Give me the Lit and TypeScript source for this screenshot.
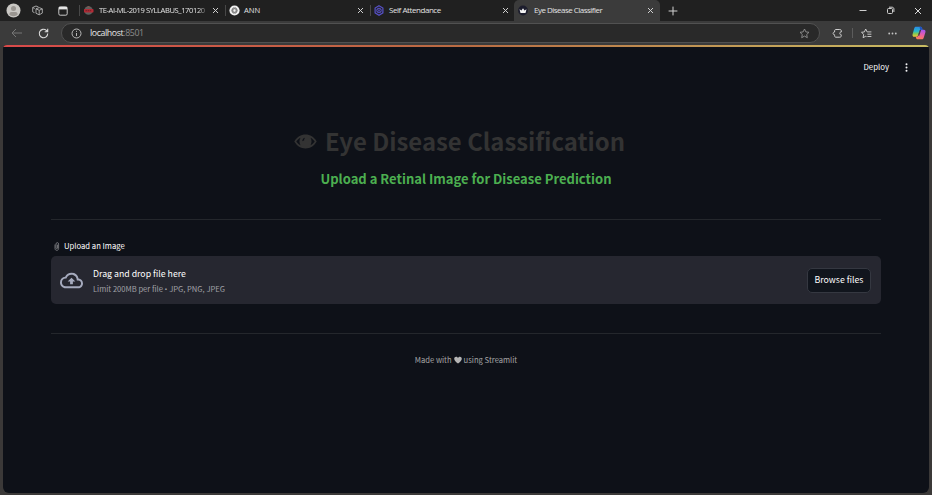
import { LitElement, html, css } from "lit";
import { customElement } from "lit/decorators.js";

const closeIcon = html`<svg class="close" width="7" height="7" viewBox="0 0 7 7"><path d="M1 1l5 5M6 1l-5 5" stroke="#d0d0d0" stroke-width="1" fill="none"/></svg>`;

@customElement("browser-tabs")
class BrowserTabs extends LitElement {
  static styles = css`
    :host { display: flex; height: 21px; background: #202020; align-items: center; color: #e2e2e2; font: 7.6px/18px "Open Sans", "Noto Sans", sans-serif; }
    svg { display: block; flex: none; }
    .tools { width: 79px; height: 20px; display: flex; align-items: center; padding-left: 6px; box-sizing: border-box; }
    .tools svg:nth-child(2) { margin-left: 11px; }
    .tools svg:nth-child(3) { margin-left: 15px; }
    .tab { box-sizing: border-box; height: 21px; display: flex; align-items: center; position: relative; padding-left: 4px; }
    .tab.sep::before { content: ""; position: absolute; left: 0; top: 5px; width: 1px; height: 11px; background: #484848; }
    .t { white-space: nowrap; height: 20px; margin-left: 4px; }
    .t1 { width: 110px; margin-left: 5px; letter-spacing: -0.42px; -webkit-mask-image: linear-gradient(90deg, #000 90%, transparent); mask-image: linear-gradient(90deg, #000 90%, transparent); }
    .t3 { margin-left: 5px; letter-spacing: -0.44px; font-size: 8px; }
    .t4 { margin-left: 6px; letter-spacing: -0.52px; font-size: 8px; }
    .a { width: 146px; } .b { width: 145px; } .c { width: 144px; }
    .d { width: 146px; background: #3b3b3b; border-radius: 5px 5px 0 0; }
    .close { margin-left: auto; margin-right: 6px; }
    .c .close { margin-right: 5px; }
    .win { margin-left: auto; display: flex; align-items: center; }
    .win svg + svg { margin-left: 19px; }
    .win svg:last-child { margin-right: 10px; }
    .plus { margin-left: 8px; }
  `;
  render() {
    return html`
      <div class="tools">
        <svg width="15" height="15" viewBox="0 0 15 15"><circle cx="7.5" cy="7.5" r="7" fill="#c9c7c3"/><circle cx="7.5" cy="5.6" r="2.5" fill="#999590"/><path d="M3.3 11.6c0-2 1-2.7 2.2-2.7h4c1.200 0 2.200.7 2.200 2.700-1 1-2.500 1.600-4.200 1.600s-3.200-.6-4.200-1.600z" fill="#999590"/></svg>
        <svg width="11" height="11" viewBox="0 0 11 11" fill="none" stroke="#b2b2b2" stroke-width=".9" stroke-linejoin="round"><path d="M4 3.800l3.300-1.200 3 1.300v4.200L7.200 9.800 4 8.300zM4 3.800l3.200 1.500 3.100-1.400M7.200 5.300v4.500M2.500 7.700L.7 6.800V2.500L4 1l2.500 1M.7 2.500l2 1"/></svg>
        <svg width="10" height="10" viewBox="0 0 10 10"><rect x=".8" y=".8" width="8.400" height="8.400" rx="1.400" fill="none" stroke="#c8c8c8"/><path d="M1 1h8v2.400H1z" fill="#e5e5e5"/></svg>
      </div>
      <div class="tab sep a">
        <svg width="11" height="11" viewBox="0 0 11 11"><circle cx="5.500" cy="5.500" r="4.300" fill="#59615f"/><path d="M3 2.500l2.500-1.400L8 2.500z" fill="#8a5552"/><rect x="1" y="4" width="9.500" height="3.400" rx=".7" fill="#b32b36"/><path d="M2.500 5.700h6.300" stroke="#6d2028" stroke-width="1" stroke-dasharray="1.500 .6"/></svg>
        <span class="t t1">TE-AI-ML-2019 SYLLABUS_170120</span>${closeIcon}
      </div>
      <div class="tab sep b">
        <svg width="11" height="11" viewBox="0 0 11 11"><circle cx="5.500" cy="5.500" r="5.100" fill="#efefef"/><g fill="none" stroke="#707070" stroke-width=".7"><ellipse cx="5.500" cy="5.500" rx="3" ry="1.700"/><ellipse cx="5.500" cy="5.500" rx="3" ry="1.700" transform="rotate(60 5.500 5.500)"/><ellipse cx="5.500" cy="5.500" rx="3" ry="1.700" transform="rotate(120 5.500 5.500)"/></g></svg>
        <span class="t">ANN</span>${closeIcon}
      </div>
      <div class="tab sep c">
        <svg width="10" height="11" viewBox="0 0 10 11" fill="none" stroke="#5751c8"><path d="M5 .8l3.900 2.300v4.700L5 10.200 1.100 7.800V3.100z" stroke-width="1.200"/><circle cx="5" cy="5.500" r="2.300"/><path d="M5 3.200v4.600M3 4.400l4 2.300M7 4.400L3 6.700" stroke-width=".6"/></svg>
        <span class="t t3">Self Attendance</span>${closeIcon}
      </div>
      <div class="tab d">
        <svg width="10" height="11" viewBox="0 0 10 11"><circle cx="5" cy="5.500" r="4.900" fill="#1c1d2d"/><path d="M1.500 4.300l2 1.200L5 3.200l1.500 2.300 2-1.200-1 3.600h-5z" fill="#f3f3f3"/></svg>
        <span class="t t4">Eye Disease Classifier</span>${closeIcon}
      </div>
      <svg class="plus" width="10" height="10" viewBox="0 0 10 10"><path d="M5 .6v8.800M.6 5h8.800" stroke="#d2d2d2"/></svg>
      <div class="win">
        <svg width="8" height="9" viewBox="0 0 8 9"><path d="M.5 4.500h7" stroke="#cfcfcf"/></svg>
        <svg width="9" height="9" viewBox="0 0 9 9" fill="none" stroke="#cfcfcf"><rect x="1.500" y="2.500" width="5" height="5" rx="1"/><path d="M3 1.200h3c1.200 0 1.900.7 1.900 1.800v3"/></svg>
        <svg width="8" height="8" viewBox="0 0 8 8"><path d="M1 1l6 6M7 1L1 7" stroke="#dcdcdc"/></svg>
      </div>`;
  }
}

@customElement("browser-bar")
class BrowserBar extends LitElement {
  static styles = css`
    :host { display: flex; height: 24px; background: #3b3b3b; align-items: center; box-sizing: border-box; padding-left: 11px; }
    svg { display: block; flex: none; }
    .reload { margin-left: 15px; }
    .url { box-sizing: border-box; width: 759px; height: 20px; margin-left: 12px; border: 1px solid #515151; border-radius: 10px; background: #292929; display: flex; align-items: center; padding: 0 9px 0 9px; color: #e6e6e6; font: 8.8px/18px "Open Sans", "Noto Sans", sans-serif; letter-spacing: -0.4px; }
    .url span { margin-left: 8px; }
    .url i { font-style: normal; color: #8c8c8c; }
    .star { margin-left: auto; }
    .ext { margin-left: 12px; }
    .line { width: 1px; height: 10px; background: #5c5c5c; margin-left: 9px; }
    .fav { margin-left: 8px; }
    .dots { margin-left: 16px; }
    .copilot { margin-left: 15px; }
  `;
  render() {
    return html`
      <svg width="12" height="10" viewBox="0 0 12 10"><path d="M11 5H1M5 1L1 5l4 4" fill="none" stroke="#777"/></svg>
      <svg class="reload" width="11" height="11" viewBox="0 0 11 11"><path d="M9.700 5.500A4.200 4.200 0 1 1 8.300 2.400L9.500 3.500M9.700.7v3h-3" fill="none" stroke="#dadada" stroke-width="1.100"/></svg>
      <div class="url">
        <svg width="11" height="11" viewBox="0 0 11 11"><circle cx="5.500" cy="5.500" r="4.500" fill="none" stroke="#b8b8b8"/><path d="M5.500 5v3M5.500 2.800v1.100" stroke="#b8b8b8"/></svg>
        <span>localhost<i>:8501</i></span>
        <svg class="star" width="11" height="11" viewBox="0 0 11 11"><path d="M5.500 1l1.350 2.900 3.150.4-2.300 2.200.6 3.200-2.800-1.600-2.800 1.600.6-3.200L1 4.300l3.150-.4z" fill="none" stroke="#929292" stroke-width=".9" stroke-linejoin="round"/></svg>
      </div>
      <svg class="ext" width="11" height="11" viewBox="0 0 11 11"><path d="M4 1.500h3.800c1 0 1.500.5 1.500 1.500v1c-1.900-.3-2.100 3 0 2.800v.8c0 1-.5 1.600-1.500 1.600H4c-1 0-1.400-.5-1.400-1.500v-.9C.6 6.900.6 4 2.600 4V3c0-1 .4-1.500 1.400-1.500z" fill="none" stroke="#cfcfcf" stroke-linejoin="round"/></svg>
      <div class="line"></div>
      <svg class="fav" width="11" height="11" viewBox="0 0 11 11" fill="none" stroke="#d5d5d5" stroke-width=".9" stroke-linejoin="round"><path d="M6.400 3.900h-.3L4.700 1 3.400 3.900l-2.900.4 2.200 2.100-.6 3.300 2.700-1.500.7.4M6.400 3.900h4M6.400 6.200h4M6.400 8.500h4"/></svg>
      <svg class="dots" width="9" height="3" viewBox="0 0 9 3" fill="#c5c5c5"><circle cx="1.200" cy="1.500" r=".9"/><circle cx="4.500" cy="1.500" r=".9"/><circle cx="7.800" cy="1.500" r=".9"/></svg>
      <svg class="copilot" width="14" height="14" viewBox="0 0 14 14">
        <defs>
          <linearGradient id="l" x1="0" y1="0" x2="0" y2="1"><stop stop-color="#2a8be8"/><stop offset=".45" stop-color="#26b8cc"/><stop offset=".7" stop-color="#84c951"/><stop offset="1" stop-color="#f5c731"/></linearGradient>
          <linearGradient id="r" x1=".5" y1="0" x2=".3" y2="1"><stop stop-color="#a855ee"/><stop offset=".5" stop-color="#e95fa5"/><stop offset="1" stop-color="#ff7e51"/></linearGradient>
        </defs>
        <path d="M4 .7h4.300c1 0 1.500.5 1.800 1.500l.5 1.600H9c-.9 0-1.400.5-1.700 1.500L6 9.300c-.3 1-.8 1.500-1.800 1.500H2.300C.8 10.800.2 9.700.6 8.200L2.200 2.500C2.500 1.300 3 .7 4 .7z" fill="url(#l)"/>
        <path d="M10 13.300H5.800c-1 0-1.500-.5-1.800-1.500l-.3-1.100h1c.9 0 1.400-.5 1.700-1.500l1.300-4c.3-1 .8-1.500 1.800-1.500h2.300c1.400 0 2 1.100 1.600 2.600l-1.600 5.200c-.3 1.200-.8 1.800-1.800 1.800z" fill="url(#r)"/>
        <path d="M8.300.7c1 0 1.500.5 1.800 1.500l.5 1.600H8.300L7.500 1.500z" fill="#224fc3"/>
        <path d="M8.600 3.900L6.700 9.700" stroke="#3b3b3b" stroke-width="1.100"/>
      </svg>`;
  }
}

@customElement("app-root")
class AppRoot extends LitElement {
  static styles = css`
    :host { display: flex; flex-direction: column; width: 932px; height: 495px; overflow: hidden; background: #3b3938; }
    svg { display: block; flex: none; }
    .page { height: 448px; margin: 0 3px; border-radius: 4px 4px 6px 6px; background: #0e1118; overflow: hidden; color: #fff; font-family: "Noto Sans CJK SC", "Noto Sans CJK JP", sans-serif; white-space: nowrap; }
    .strip { height: 2px; background: linear-gradient(90deg, #d94a4a, #b96c43 50%, #c9bd64); }
    header { height: 40px; display: flex; align-items: center; justify-content: flex-end; padding-right: 20px; font-size: 7.8px; line-height: 12px; }
    header span { margin-top: -1px; }
    header svg { margin-left: 15px; }
    main { width: 830px; margin: 0 auto 0 48px; }
    h1 { margin: 37px 13px 0 0; height: 34px; display: flex; justify-content: center; align-items: center; gap: 8px; font-size: 23.9px; line-height: 34px; font-weight: 700; color: #333; }
    h3 { margin: 11px 0 0; height: 20px; text-align: center; font-size: 13.02px; line-height: 20px; color: #4caf50; font-weight: 700; }
    .rule { height: 1px; background: #24272c; }
    .r1 { margin-top: 30px; }
    label { margin-top: 19px; height: 14px; display: flex; align-items: center; padding-left: 3px; font-size: 7.700px; line-height: 14px; }
    label span { margin-left: 4px; }
    .drop { box-sizing: border-box; margin-top: 3px; height: 48px; border-radius: 5px; background: #262730; display: flex; align-items: center; padding: 0 10px 0 9px; }
    .copy { margin-left: 10px; padding-top: 2px; }
    .big { font-size: 8.750px; line-height: 15px; }
    .small { font-size: 7.600px; line-height: 15px; color: #a0a1a7; }
    .small i { font-family: "Open Sans", sans-serif; font-style: normal; }
    button { box-sizing: border-box; margin: 0 0 0 auto; padding: 0; width: 64px; height: 25px; border: 1px solid #353841; border-radius: 5px; background: #11151d; color: #fff; font: 8.750px/20px "Noto Sans CJK SC", sans-serif; }
    .r2 { margin-top: 29px; }
    footer { margin-top: 19px; height: 14px; display: flex; align-items: center; justify-content: center; gap: 2px; font-size: 7.640px; line-height: 14px; color: #a5a5a5; }
  `;
  render() {
    return html`
      <browser-tabs></browser-tabs>
      <browser-bar></browser-bar>
      <div class="page">
        <div class="strip"></div>
        <header><span>Deploy</span><svg width="5" height="9" viewBox="0 0 5 9" fill="#f4f4f6"><circle cx="2.500" cy="1.200" r="1"/><circle cx="2.500" cy="4.500" r="1"/><circle cx="2.500" cy="7.800" r="1"/></svg></header>
        <main>
          <h1>
            <svg width="23" height="15" viewBox="0 0 23 15"><path d="M.3 7.500C3 3 6.800.6 11.500.6S20 3 22.700 7.500C20 12 16.200 14.400 11.500 14.400S3 12 .3 7.500z" fill="#333"/><path d="M6.500 3.800C4.600 4.800 3.300 6 2.300 7.500c1 1.500 2.300 2.700 4.200 3.700-1.400-2.400-1.400-5 0-7.400zM16.500 3.800c1.900 1 3.200 2.200 4.200 3.700-1 1.500-2.300 2.700-4.200 3.700 1.400-2.400 1.400-5 0-7.400z" fill="#0e1118"/><path d="M8.300 7.200c0-2 1.200-3.300 3-3.500-1 .8-1.300 1.600-1.100 2.500z" fill="#0e1118"/></svg>
            <span>Eye Disease Classification</span>
          </h1>
          <h3>Upload a Retinal Image for Disease Prediction</h3>
          <div class="rule r1"></div>
          <label>
            <svg width="6" height="9" viewBox="0 0 6 9" fill="none" stroke="#85868a" stroke-width=".8"><path d="M1 2.500v4c0 2.500 3.600 2.500 3.600 0V2C4.600.1 2 .1 2 2v4c0 1 1.500 1 1.500 0V2.700"/></svg>
            <span>Upload an Image</span>
          </label>
          <div class="drop">
            <svg width="23" height="23" viewBox="0 0 24 24" fill="#a5aabd"><path d="M19.350 10.040A7.490 7.490 0 0 0 12 4C9.110 4 6.600 5.640 5.350 8.040A5.994 5.994 0 0 0 0 14c0 3.310 2.690 6 6 6h13c2.760 0 5-2.240 5-5 0-2.640-2.050-4.780-4.650-4.960zM19 18H6c-2.210 0-4-1.790-4-4s1.790-4 4-4h.71C7.370 7.690 9.480 6 12 6c3.040 0 5.500 2.460 5.500 5.500v.5H19c1.660 0 3 1.340 3 3s-1.340 3-3 3zM8 13h2.550v3h2.900v-3H16l-4-4z"/></svg>
            <div class="copy"><div class="big">Drag and drop file here</div><div class="small">Limit 200MB per file <i>•</i> JPG, PNG, JPEG</div></div>
            <button>Browse files</button>
          </div>
          <div class="rule r2"></div>
          <footer><span>Made with</span><svg width="8" height="8" viewBox="0 0 8 8"><path d="M4 7.600C2 5.900.2 4.500.2 2.700.2.400 3 0 4 1.900 5 0 7.800.4 7.800 2.700 7.800 4.500 6 5.900 4 7.600z" fill="#b5b5b5"/></svg><span>using Streamlit</span></footer>
        </main>
      </div>`;
  }
}
